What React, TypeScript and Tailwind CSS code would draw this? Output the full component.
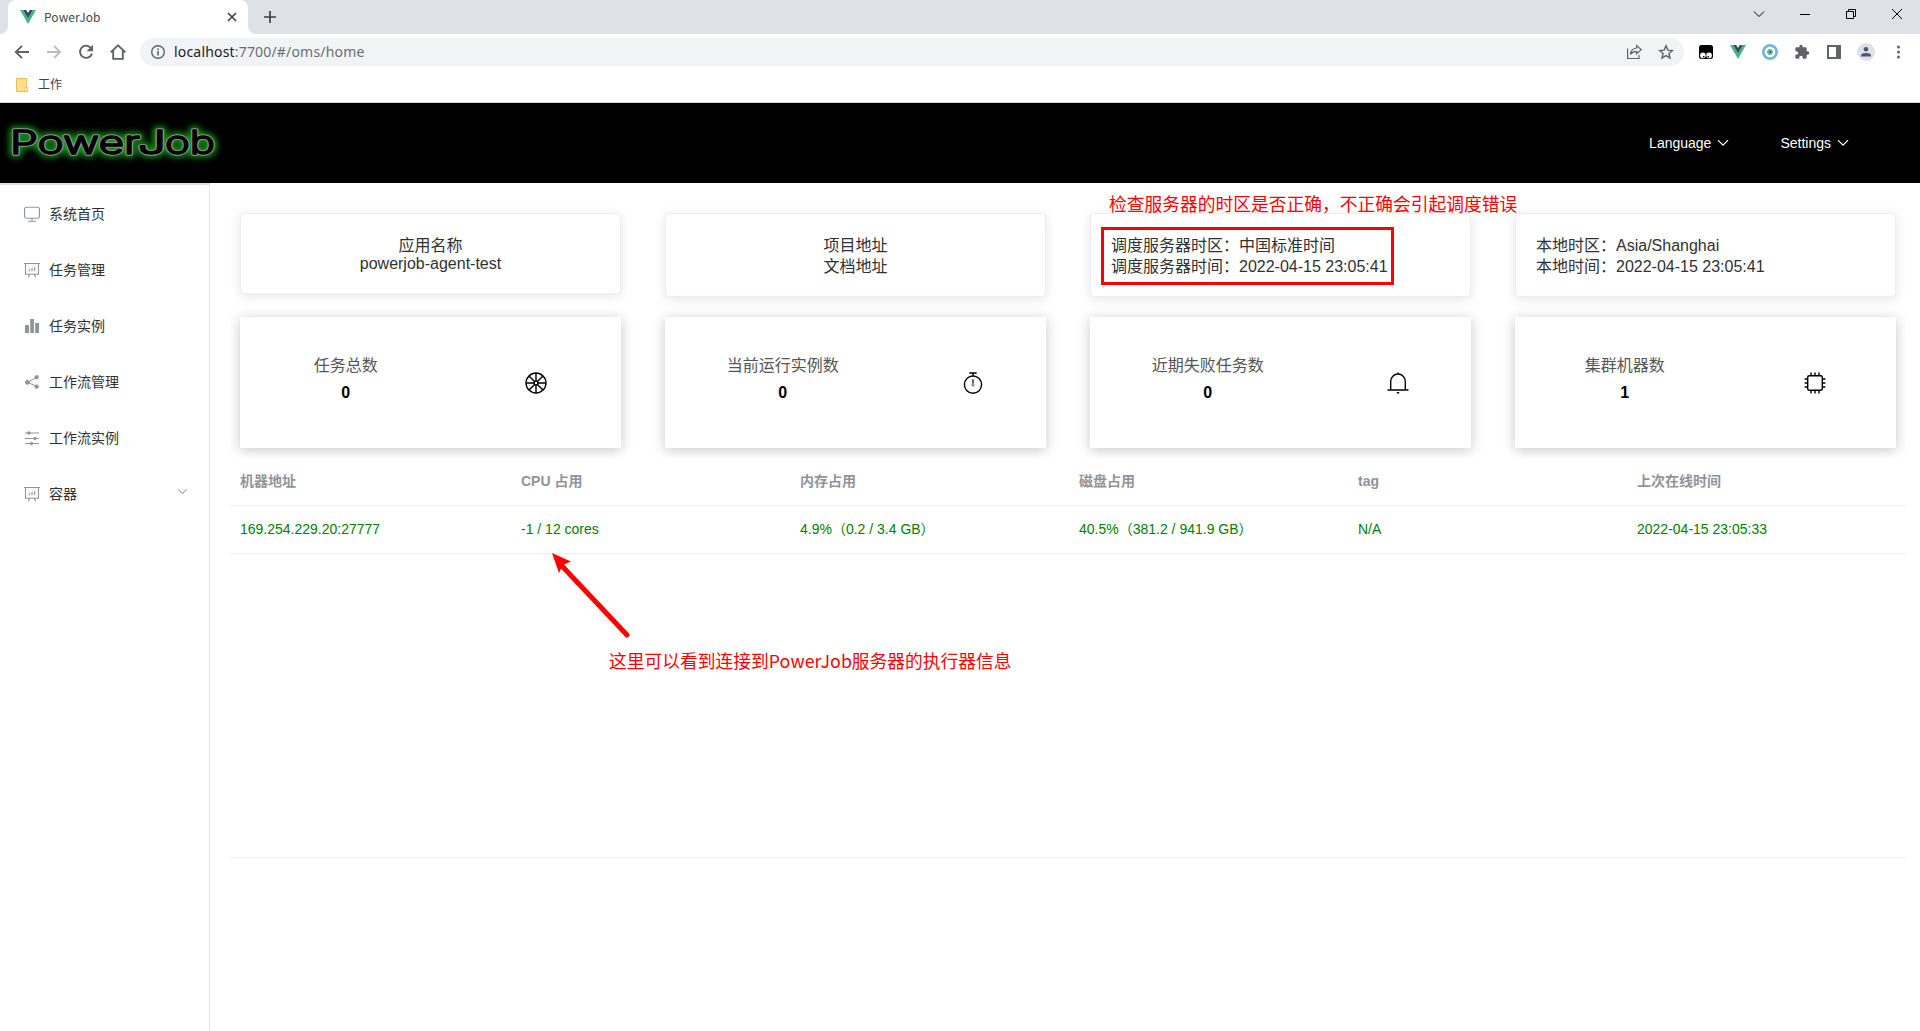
import React from "react";

type IconProps = { className?: string };

const VueLogo = ({ className = "" }: IconProps) => (
  <svg viewBox="0 0 16 14" className={className}>
    <path d="M0 0h3.2L8 8.4 12.8 0H16L8 14z" fill="#41b883" />
    <path d="M3.2 0h3L8 3.1 9.8 0h3L8 8.4z" fill="#35495e" />
  </svg>
);

const Chevron = ({ className = "" }: IconProps) => (
  <svg viewBox="0 0 12 8" fill="none" stroke="currentColor" strokeWidth="1.2" className={className}>
    <path d="M1 1.2 6 6.2l5-5" />
  </svg>
);

const Monitor = () => (
  <svg viewBox="0 0 16 16" fill="none" stroke="#909399" strokeWidth="1.1" className="h-4 w-4">
    <rect x=".6" y="1.2" width="14.8" height="11" rx="1.6" />
    <path d="M8 12v2.4M4 15.2h8" />
  </svg>
);

const Board = () => (
  <svg viewBox="0 0 16 16" fill="none" stroke="#909399" strokeWidth="1.1" className="h-4 w-4">
    <path d="M0 1.5h16M1.5 1.5v10.8h13V1.5M5.6 12.3l-1.3 3M10.4 12.3l1.3 3M5.3 7v2.2M8 6v3.2M10.7 5v4.2" />
  </svg>
);

const Bars = () => (
  <svg viewBox="0 0 16 16" fill="#909399" className="h-4 w-4">
    <path d="M1 7h4v8H1zM6.2 1h3.7v14H6.2zM11.2 5H15v10h-3.8z" />
  </svg>
);

const Share = () => (
  <svg viewBox="0 0 16 16" fill="#909399" stroke="#909399" className="h-4 w-4">
    <path d="M3.4 8.4 12.4 3.6M3.4 8.4l9 3.8" fill="none" />
    <circle cx="3.4" cy="8.4" r="1.9" />
    <circle cx="12.6" cy="3.2" r="1.7" />
    <circle cx="12.6" cy="12.6" r="1.7" />
  </svg>
);

const Sliders = () => (
  <svg viewBox="0 0 16 16" fill="#909399" stroke="#909399" className="h-4 w-4">
    <path d="M1 3h14M1 8.5h14M1 13.5h14" fill="none" />
    <circle cx="5" cy="3" r="1.2" />
    <circle cx="11" cy="8.5" r="1.2" />
    <circle cx="7.5" cy="13.5" r="1.2" />
  </svg>
);

const Wheel = () => (
  <svg viewBox="0 0 22 22" fill="none" stroke="#000" strokeWidth="1.4" className="h-[22px] w-[22px]">
    <circle cx="11" cy="11" r="10" />
    <circle cx="11" cy="11" r="1.9" />
    <path d="M11 1v8M11 13v8M1 11h8M13 11h8M4 4l5.6 5.6M12.4 12.4 18 18M18 4l-5.6 5.6M9.6 12.4 4 18" />
  </svg>
);

const Stopwatch = () => (
  <svg viewBox="0 0 22 22" fill="none" stroke="#000" strokeWidth="1.4" className="h-[22px] w-[22px]">
    <circle cx="11" cy="12.6" r="8.6" />
    <path d="M7.3 1h7.4M11 1v3" />
    <path d="M11 7.2v4.4" strokeWidth="1.2" />
    <circle cx="11" cy="13" r="1.2" strokeWidth=".8" stroke="#555" />
  </svg>
);

const Bell = () => (
  <svg viewBox="0 0 22 22" fill="none" stroke="#000" strokeWidth="1.4" className="h-[22px] w-[22px]">
    <path d="M3.7 18V9.3a7.3 7.3 0 0 1 14.6 0V18M.5 18h21M11 .4v1.6M9.8 20.8h2.4" />
  </svg>
);

const Chip = () => (
  <svg viewBox="0 0 22 22" fill="none" stroke="#000" strokeWidth="1.4" className="h-[22px] w-[22px]">
    <rect x="3.7" y="3.7" width="14.6" height="14.6" rx="1.6" />
    <path d="M7 .6v3M11 .6v3M15 .6v3M7 18.4v3M11 18.4v3M15 18.4v3M.6 7h3M.6 11h3M.6 15h3M18.4 7h3M18.4 11h3M18.4 15h3" />
  </svg>
);

const menu = [
  { label: "系统首页", icon: <Monitor /> },
  { label: "任务管理", icon: <Board /> },
  { label: "任务实例", icon: <Bars /> },
  { label: "工作流管理", icon: <Share /> },
  { label: "工作流实例", icon: <Sliders /> },
  { label: "容器", icon: <Board />, expandable: true },
];

const stats = [
  { label: "任务总数", value: "0", icon: <Wheel /> },
  { label: "当前运行实例数", value: "0", icon: <Stopwatch /> },
  { label: "近期失败任务数", value: "0", icon: <Bell /> },
  { label: "集群机器数", value: "1", icon: <Chip /> },
];

const headers = ["机器地址", "CPU 占用", "内存占用", "磁盘占用", "tag", "上次在线时间"];
const row = [
  "169.254.229.20:27777",
  "-1 / 12 cores",
  "4.9%（0.2 / 3.4 GB）",
  "40.5%（381.2 / 941.9 GB）",
  "N/A",
  "2022-04-15 23:05:33",
];

function TabStrip() {
  return (
    <div className="flex h-[34px] items-stretch bg-[#dee1e6]">
      <div className="flex w-2 items-end bg-white">
        <div className="h-[34px] w-2 rounded-br-lg bg-[#dee1e6]" />
      </div>
      <div className="flex w-[240px] items-center rounded-t-lg bg-white pr-[11px] pl-3">
        <VueLogo className="h-[14px] w-4" />
        <span className="ml-2 flex-1 font-['Noto_Sans_CJK_SC'] text-[12px] leading-4 tracking-[0.1px] text-[#45494d]">PowerJob</span>
        <svg viewBox="0 0 10 10" className="h-[10px] w-[10px]" stroke="#3c4043" strokeWidth="1.6">
          <path d="m1 1 8 8M9 1 1 9" />
        </svg>
      </div>
      <div className="flex w-2 bg-white">
        <div className="h-[34px] w-2 rounded-bl-lg bg-[#dee1e6]" />
      </div>
      <svg viewBox="0 0 12 12" className="mt-[11px] ml-2 h-3 w-3" stroke="#3c4043" strokeWidth="1.7">
        <path d="M6 0v12M0 6h12" />
      </svg>
      <div className="flex-1" />
      <div className="flex items-start pt-[9px] pr-[18px] text-black">
        <svg viewBox="0 0 12 10" fill="none" stroke="currentColor" className="mr-[35px] h-[10px] w-3">
          <path d="m1 2.5 5 5 5-5" />
        </svg>
        <svg viewBox="0 0 10 10" stroke="currentColor" className="mr-9 h-[10px] w-[10px]">
          <path d="M0 5.5h10" />
        </svg>
        <svg viewBox="0 0 10 10" fill="none" stroke="currentColor" className="mr-9 h-[10px] w-[10px]">
          <path d="M.5 2.5h7v7h-7zM2.5 2.5v-2h7v7h-2" />
        </svg>
        <svg viewBox="0 0 10 10" stroke="currentColor" className="h-[10px] w-[10px]">
          <path d="m0 0 10 10M10 0 0 10" />
        </svg>
      </div>
    </div>
  );
}

function Toolbar() {
  return (
    <div className="flex h-9 items-center bg-white pl-[14px]">
      <svg viewBox="0 0 16 16" fill="none" stroke="#5f6368" strokeWidth="1.9" className="h-4 w-4">
        <path d="M15 8H2.5M8 1.8 1.8 8 8 14.2" />
      </svg>
      <svg viewBox="0 0 16 16" fill="none" stroke="#babcbe" strokeWidth="1.9" className="ml-4 h-4 w-4">
        <path d="M1 8h12.5M8 1.8 14.2 8 8 14.2" />
      </svg>
      <svg viewBox="0 0 16 16" fill="none" stroke="#5f6368" strokeWidth="1.9" className="ml-4 h-4 w-4">
        <path d="M13.2 4.3A6.1 6.1 0 1 0 14 9.6" />
        <path d="M15 .8v6.4H8.6z" fill="#5f6368" stroke="none" />
      </svg>
      <svg viewBox="0 0 16 16" fill="none" stroke="#5f6368" strokeWidth="1.9" className="ml-4 h-4 w-4">
        <path d="M.6 8.4 8 1.4l7.4 7M3.2 6.6v8.3h9.6V6.6" />
      </svg>
      <div className="ml-[14px] flex h-7 w-[1544px] items-center rounded-full bg-[#f1f3f4] pl-[11px]">
        <svg viewBox="0 0 14 14" fill="none" stroke="#5f6368" strokeWidth="1.4" className="h-[14px] w-[14px]">
          <circle cx="7" cy="7" r="6.3" />
          <path d="M7 6v4.4M7 3.4V5" strokeWidth="1.6" />
        </svg>
        <span className="ml-[9px] flex-1 pb-px font-['Noto_Sans'] text-[14px] tracking-[0.18px] text-[#202124]">
          localhost<span className="text-[#6a6e73]">:7700/#/oms/home</span>
        </span>
        <svg viewBox="0 0 16 16" fill="none" stroke="#5f6368" strokeWidth="1.2" className="h-4 w-4">
          <path d="M1.6 4.5v10H13V11M10.6 1.6l4.6 4-4.6 4.1V7.4c-3 0-4.8 1-6.2 3 .4-3.2 2.6-6 6.2-6.4z" />
        </svg>
        <svg viewBox="0 0 16 16" fill="none" stroke="#5f6368" strokeWidth="1.4" className="mr-[10px] ml-4 h-4 w-4">
          <path d="m8 1.8 1.8 4.3 4.6.4-3.5 3 1.1 4.6L8 11.6l-4 2.5 1.1-4.6-3.5-3 4.6-.4z" />
        </svg>
      </div>
      <svg viewBox="0 0 14 14" className="ml-[15px] h-[14px] w-[14px]">
        <rect width="14" height="14" rx="2.5" />
        <circle cx="3.9" cy="10.4" r="2.8" fill="#fff" />
        <circle cx="10.1" cy="10.4" r="2.8" fill="#fff" />
        <rect x="4" y="11" width="1.4" height="1.4" />
        <rect x="8.6" y="11" width="1.4" height="1.4" />
      </svg>
      <VueLogo className="ml-[17px] h-[14px] w-4" />
      <svg viewBox="0 0 16 16" className="ml-4 h-4 w-4">
        <circle cx="8" cy="8" r="6.6" fill="#fff" stroke="#7ab5d8" strokeWidth="2.8" />
        <circle cx="8" cy="8" r="2.9" fill="#5cb896" />
        <circle cx="8.3" cy="8" r="1" fill="#2b5f6c" />
      </svg>
      <svg viewBox="0 0 24 24" fill="#5f6368" className="ml-4 h-4 w-4">
        <path d="M20.5 11H19V7a2 2 0 0 0-2-2h-4V3.5a2.5 2.5 0 0 0-5 0V5H4a2 2 0 0 0-2 2v3.8h1.5a2.7 2.7 0 0 1 0 5.4H2V20a2 2 0 0 0 2 2h3.8v-1.5a2.7 2.7 0 0 1 5.4 0V22H17a2 2 0 0 0 2-2v-4h1.5a2.5 2.5 0 0 0 0-5z" />
      </svg>
      <svg viewBox="0 0 14 14" className="ml-[17px] h-[14px] w-[14px]">
        <path d="M0 0h14v14H0zM2 2v10h7V2z" fill="#5f6368" fillRule="evenodd" />
      </svg>
      <svg viewBox="0 0 18 18" className="ml-4 h-[18px] w-[18px]">
        <circle cx="9" cy="9" r="9" fill="#dee1e6" />
        <circle cx="9" cy="6.3" r="2.3" fill="#4a5571" />
        <path d="M4 13.5v-1c0-3.2 10-3.2 10 0v1z" fill="#4a5571" />
      </svg>
      <svg viewBox="0 0 4 14" fill="#5f6368" className="ml-[22px] h-[14px] w-1">
        <circle cx="1.5" cy="2" r="1.5" />
        <circle cx="1.5" cy="7" r="1.5" />
        <circle cx="1.5" cy="12" r="1.5" />
      </svg>
    </div>
  );
}

const wordmark = [
  { text: "Power", x: 2, width: 130 },
  { text: "J", x: 130, width: 28 },
  { text: "ob", x: 157, width: 50 },
];

const logoLayers = [
  { fill: "#17921d", stroke: "#17921d", strokeWidth: 7, filter: "url(#glow)" },
  { fill: "#8c968c", stroke: "#8c968c", strokeWidth: 3.4 },
  { fill: "#000", stroke: "#000", strokeWidth: 1.6 },
];

function AppHeader() {
  return (
    <header className="flex h-20 items-center justify-between bg-black pr-[70px] pl-2">
      <svg width="212" height="44" viewBox="0 0 212 44" className="overflow-visible">
        <defs>
          <filter id="glow" x="-20%" y="-40%" width="140%" height="180%">
            <feGaussianBlur stdDeviation="3" />
          </filter>
        </defs>
        <g fontFamily="Inter" fontSize="33" fontWeight="300" strokeLinejoin="round">
          {logoLayers.map((layer) =>
            wordmark.map((w) => (
              <text key={layer.fill + w.text} x={w.x} y="32.5" textLength={w.width} lengthAdjust="spacingAndGlyphs" {...layer}>
                {w.text}
              </text>
            )),
          )}
        </g>
      </svg>
      <nav className="flex items-center text-[14px] text-white">
        <span>Language</span>
        <Chevron className="mr-[51px] ml-[6px] h-2 w-3" />
        <span>Settings</span>
        <Chevron className="mr-px ml-[6px] h-2 w-3" />
      </nav>
    </header>
  );
}

function Sidebar() {
  return (
    <aside className="w-[210px] border-t-2 border-r border-t-[#dcdfe6] border-r-[#e6e6e6] pt-px">
      {menu.map((m) => (
        <div key={m.label} className="flex h-14 items-center pr-[21px] pl-6 text-[14px] text-[#303133]">
          {m.icon}
          <span className="ml-[9px] flex-1">{m.label}</span>
          {m.expandable && <Chevron className="mb-1.5 h-[7px] w-[11px] text-[#a4a7ad]" />}
        </div>
      ))}
    </aside>
  );
}

const infoCard =
  "rounded border border-[#ebeef5] bg-white px-5 pt-[21px] pb-[19px] text-[16px] leading-[21px] text-[#303133] shadow-[0_2px_12px_rgba(0,0,0,0.1)]";

function Main() {
  return (
    <main className="flex-1 pr-[14px] pl-5">
      <div className="overflow-hidden px-[10px] pt-[30px] pb-[10px]">
        <div className="grid grid-cols-4 items-start gap-x-11">
          <div className={infoCard + " text-center"}>
            <div>应用名称</div>
            <div className="-mt-px mb-px leading-[18px]">powerjob-agent-test</div>
          </div>
          <div className={infoCard + " text-center"}>
            <div>项目地址</div>
            <div>文档地址</div>
          </div>
          <div className={infoCard + " relative"}>
            <div>调度服务器时区：中国标准时间</div>
            <div>调度服务器时间：2022-04-15 23:05:41</div>
            <div className="absolute top-[13px] left-[10px] h-[58px] w-[293px] border-3 border-[#f00]" />
            <div className="absolute -top-[21px] left-[18px] text-[17.75px] leading-6 whitespace-nowrap text-[#f00]">
              检查服务器的时区是否正确，不正确会引起调度错误
            </div>
          </div>
          <div className={infoCard}>
            <div>本地时区：Asia/Shanghai</div>
            <div>本地时间：2022-04-15 23:05:41</div>
          </div>
        </div>
        <div className="mt-5 grid grid-cols-4 gap-x-11">
          {stats.map((s) => (
            <div key={s.label} className="flex h-[131px] items-center justify-around bg-white shadow-[0_2px_12px_rgba(0,0,0,0.22)]">
              <div className="-mt-1.5 text-center text-[16px]">
                <div className="leading-7 text-[#555]">{s.label}</div>
                <div className="-mt-px mb-px leading-7 font-bold text-black">{s.value}</div>
              </div>
              {s.icon}
            </div>
          ))}
        </div>
      </div>
      <div className="relative h-[400px] border-b border-[#ebeef5] text-[14px]">
        <div className="flex h-12 border-b border-[#ebeef5] font-bold text-[#909399]">
          {headers.map((h, i) => (
            <div key={h} className={(i === 0 ? "w-[281px]" : "w-[279px]") + " pl-[10px] leading-[47px]"}>
              {h}
            </div>
          ))}
        </div>
        <div className="flex h-12 border-b border-[#ebeef5] text-[#008000]">
          {row.map((c, i) => (
            <div key={c} className={(i === 0 ? "w-[281px]" : "w-[279px]") + " pl-[10px] leading-[47px]"}>
              {c}
            </div>
          ))}
        </div>
        <svg viewBox="0 0 80 86" className="absolute top-[95px] left-[320px] h-[86px] w-20">
          <path d="M12 13 77 82" stroke="#f00" strokeWidth="5" strokeLinecap="round" />
          <path d="M2 0 21 8.5 13 12 9 20z" fill="#f00" />
        </svg>
        <div className="absolute top-[190px] left-[379px] flex items-baseline text-[17.75px] leading-6 whitespace-nowrap text-[#f00]">
          这里可以看到连接到
          <span className="w-[83px] font-['Noto_Sans_CJK_SC'] tracking-[0.1px]">PowerJob</span>
          服务器的执行器信息
        </div>
      </div>
    </main>
  );
}

export default function App() {
  return (
    <div className="flex h-[1031px] w-[1920px] flex-col overflow-hidden bg-white font-['Liberation_Sans','Noto_Sans_CJK_SC',sans-serif]">
      <TabStrip />
      <Toolbar />
      <div className="flex h-[33px] items-center border-b border-[#d5d7da] pb-0.5 pl-4 text-[12px] text-[#3c4043]">
        <svg viewBox="0 0 12 14" className="h-[14px] w-3">
          <path d="M.5.5h10.3v13H.5z" fill="#ffe08a" stroke="#e8c14c" />
          <path d="M9 9.5h2.5v4H9z" fill="#ffe9a8" stroke="#e8c14c" strokeWidth=".8" />
        </svg>
        <span className="ml-[10px]">工作</span>
      </div>
      <AppHeader />
      <div className="flex min-h-0 flex-1">
        <Sidebar />
        <Main />
      </div>
    </div>
  );
}
